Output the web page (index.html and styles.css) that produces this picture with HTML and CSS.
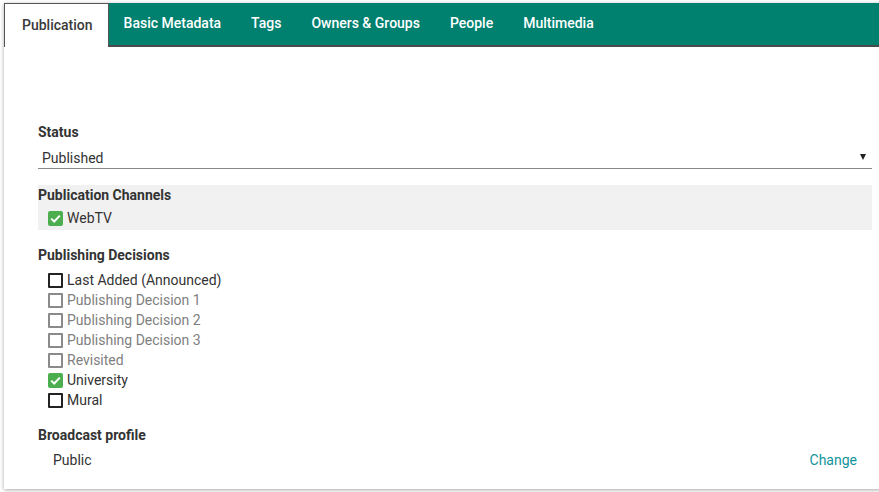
FILE: index.html
```html
<!DOCTYPE html>
<html>
<head>
<meta charset="utf-8">
<link rel="stylesheet" href="styles.css">
</head>
<body>
<div class="card">
  <nav class="tabs">
    <div class="tab active">Publication</div>
    <div class="tab">Basic Metadata</div>
    <div class="tab">Tags</div>
    <div class="tab">Owners &amp; Groups</div>
    <div class="tab">People</div>
    <div class="tab">Multimedia</div>
  </nav>
  <div class="content">
    <section class="field">
      <div class="label">Status</div>
      <div class="select"><span>Published</span><span class="arrow"></span></div>
    </section>
    <section class="field channels">
      <div class="label">Publication Channels</div>
      <div class="check"><span class="box checked"><svg viewBox="0 0 15 15" width="15" height="15"><path d="M3.2 7.6 L6.2 10.5 L11.8 4.6" fill="none" stroke="#fff" stroke-width="2"/></svg></span>WebTV</div>
    </section>
    <section class="field decisions">
      <div class="label">Publishing Decisions</div>
      <div class="check"><span class="box"></span>Last Added (Announced)</div>
      <div class="check disabled"><span class="box"></span>Publishing Decision 1</div>
      <div class="check disabled"><span class="box"></span>Publishing Decision 2</div>
      <div class="check disabled"><span class="box"></span>Publishing Decision 3</div>
      <div class="check disabled"><span class="box"></span>Revisited</div>
      <div class="check"><span class="box checked"><svg viewBox="0 0 15 15" width="15" height="15"><path d="M3.2 7.6 L6.2 10.5 L11.8 4.6" fill="none" stroke="#fff" stroke-width="2"/></svg></span>University</div>
      <div class="check"><span class="box"></span>Mural</div>
    </section>
    <section class="field profile">
      <div class="label">Broadcast profile</div>
      <div class="profile-row"><span>Public</span><a class="change">Change</a></div>
    </section>
  </div>
</div>
</body>
</html>
```
FILE: styles.css
```css
html, body {
  margin: 0;
  padding: 0;
  background: #ffffff;
  overflow: hidden;
}
body {
  font-family: Roboto, "Liberation Sans", sans-serif;
  font-size: 14px;
  line-height: 20px;
  color: #333333;
  width: 879px;
  height: 492px;
}
.card {
  margin: 3px -10px 0 4px;
  height: 486px;
  background: #fff;
  box-shadow: 0 1px 4px rgba(0,0,0,0.35);
}
.tabs {
  display: flex;
  background: #00806f;
  height: 42px;
  border-bottom: 2px solid #4a4a4a;
}
.tab {
  padding: 0 15px;
  color: #fff;
  font-weight: 500;
  font-size: 14px;
  line-height: 40px;
  white-space: nowrap;
}
.tab.active {
  background: #fff;
  color: #3a3a3a;
  border: 1px solid #555;
  border-bottom: none;
  height: 43px;
  padding: 0 15px 0 17px;
  line-height: 42px;
}
.content {
  padding: 75px 17px 0 34px;
}
.label {
  font-weight: 700;
  line-height: 20px;
}
.select {
  margin-top: 5px;
  display: flex;
  justify-content: space-between;
  align-items: center;
  padding: 0 6px 0 4px;
  height: 21px;
  border-bottom: 1px solid #888;
}
.arrow {
  width: 0;
  height: 0;
  border-left: 3px solid transparent;
  border-right: 3px solid transparent;
  border-top: 6px solid #222;
  margin-top: -2px;
}
.channels {
  margin-top: 16px;
  background: #f1f1f1;
  height: 45px;
}
.check {
  display: flex;
  align-items: center;
  height: 20px;
  padding-left: 10px;
}
.channels .check {
  margin-top: 3px;
}
.box {
  width: 11px;
  height: 11px;
  border: 2px solid #222;
  border-radius: 1px;
  margin-right: 4px;
  flex: none;
  position: relative;
}
.box.checked {
  width: 15px;
  height: 15px;
  border: none;
  background: #4cae4f;
  border-radius: 2px;
}
.box svg {
  display: block;
}
.disabled {
  color: #808080;
}
.disabled .box {
  border-color: #8a8a8a;
}
.decisions {
  margin-top: 15px;
}
.decisions .label {
  margin-bottom: 5px;
}
.profile {
  margin-top: 15px;
}
.profile-row {
  margin-top: 5px;
  display: flex;
  justify-content: space-between;
  padding: 0 15px;
}
.change {
  color: #12949a;
  cursor: pointer;
}
```
